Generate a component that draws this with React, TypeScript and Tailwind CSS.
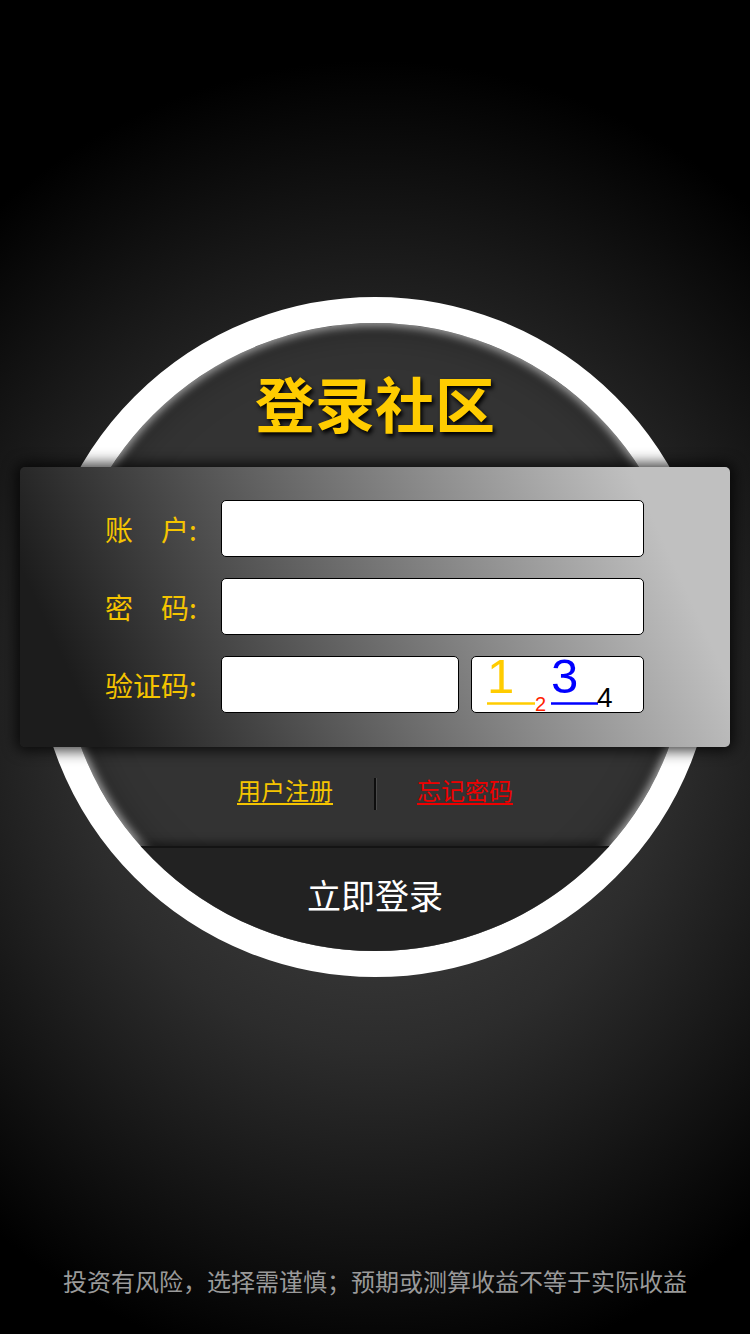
import React from "react";

// captcha image drawn as svg: digits with coloured underlines
function Captcha() {
  return (
    <div className="h-[57px] w-[173px] shrink-0 rounded-[5px] border border-black bg-white">
      <svg width="171" height="55" viewBox="0 0 171 55" className="block overflow-visible">
        <g fontFamily="'Liberation Sans', Arial, sans-serif">
          <text x="15" y="36" fontSize="49" fill="#ffcc00">1</text>
          <line x1="15" y1="46.5" x2="63" y2="46.5" stroke="#ffcc00" strokeWidth="2.5" />
          <text x="63" y="54" fontSize="20" fill="#ff2200">2</text>
          <text x="79" y="36" fontSize="49" fill="#0000ff">3</text>
          <line x1="79" y1="46.5" x2="126" y2="46.5" stroke="#0000ff" strokeWidth="2.5" />
          <text x="125" y="50" fontSize="28" fill="#000">4</text>
        </g>
      </svg>
    </div>
  );
}

function Field({ label, wide = true }: { label: string; wide?: boolean }) {
  return (
    <div className="flex items-center">
      <span className="w-[116px] shrink-0 whitespace-pre text-[28px] leading-none text-[#f5c400]">{label}</span>
      {wide ? (
        <div className="h-[57px] w-[423px] rounded-[5px] border border-black bg-white" />
      ) : (
        <div className="flex gap-[12px]">
          <div className="h-[57px] w-[238px] rounded-[5px] border border-black bg-white" />
          <Captcha />
        </div>
      )}
    </div>
  );
}

export default function App() {
  return (
    <main className="flex min-h-[1334px] w-[750px] flex-col items-center bg-black bg-[radial-gradient(ellipse_600px_660px_at_50%_54%,#4a4a4a_0%,#2c2c2c_50%,#000_100%)] pt-[297px] font-['Noto_Sans_CJK_SC','Noto_Sans',sans-serif]">
      {/* ring */}
      <div className="flex h-[680px] w-[680px] shrink-0 flex-col items-center rounded-full border-[26px] border-white bg-[#333] shadow-[inset_0_0_8px_3px_rgba(255,255,255,0.55),inset_0_0_40px_rgba(0,0,0,0.35)]">
        <h1 className="mt-[49px] text-[60px] font-bold leading-[60px] text-[#ffcc00] [text-shadow:2px_3px_4px_#000]">
          登录社区
        </h1>

        {/* form card */}
        <div className="mt-[35px] flex h-[280px] w-[710px] shrink-0 flex-col gap-[21px] rounded-[5px] bg-[linear-gradient(65deg,#1c1c1c_10%,#c0c0c0_88%)] pl-[85px] pt-[33px] shadow-[0_0_14px_4px_rgba(0,0,0,0.75)]">
          <Field label={"账　户:"} />
          <Field label={"密　码:"} />
          <Field label={"验证码:"} wide={false} />
        </div>

        {/* links */}
        <div className="flex h-[99px] items-start pt-[31px]">
          <a className="text-[24px] leading-[24px] text-[#f5c400] underline underline-offset-[3px]">用户注册</a>
          <span className="mx-[41px] h-[32px] w-[2px] bg-[#0e0e0e] shadow-[1px_0_0_#4a4a4a]" />
          <a className="text-[24px] leading-[24px] text-[#ee0000] underline underline-offset-[3px]">忘记密码</a>
        </div>

        <button className="flex h-[105px] w-[628px] shrink-0 items-center justify-center border-t-2 border-[#141414] bg-[#222] pb-[10px] text-[34px] leading-none text-white shadow-[0_-4px_8px_rgba(0,0,0,0.45)] [clip-path:circle(314px_at_50%_-209px)]">
          立即登录
        </button>
      </div>

      <p className="mt-auto pb-[41px] text-[24px] leading-[24px] text-[#9a9a9a]">
        投资有风险，选择需谨慎；预期或测算收益不等于实际收益
      </p>
    </main>
  );
}
